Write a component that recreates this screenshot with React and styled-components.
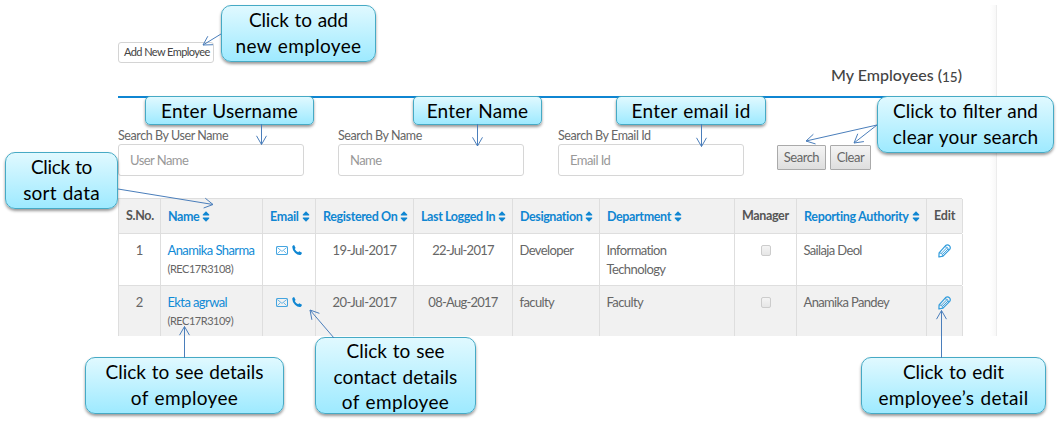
import React from 'react';
import styled, { createGlobalStyle } from 'styled-components';

const GlobalStyle = createGlobalStyle`
  * { box-sizing: border-box; }
  body { margin: 0; background: #fff; font-family: Lato, "Liberation Sans", sans-serif; color: #666; }
`;

const Stage = styled.div`
  position: relative;
  width: 1060px;
  height: 432px;
  overflow: hidden;
  background: #fff;
`;

const Page = styled.main`
  width: 997px;
  height: 331px;
  margin-top: 5px;
  padding: 37px 34px 0 118px;
  overflow: hidden;
  border-right: 1px solid #ececec;
  background: linear-gradient(to left, #f8f8f8, #fff 6px);
`;

const Txt = styled.span`
  letter-spacing: ${(p) => p.$ls || 0}px;
  white-space: nowrap;
`;

const AddButton = styled.button`
  display: block;
  width: 96px;
  height: 21px;
  padding: 0 0 1px 5px;
  border: 1px solid #d4d4d4;
  border-radius: 3px;
  background: #fff;
  color: #444;
  font: 11px/18px Lato, sans-serif;
  text-align: left;
`;

const Heading = styled.h1`
  height: 35px;
  margin: 0;
  padding-top: 2px;
  border-bottom: 2px solid #0f86d2;
  color: #444;
  font: 500 16px/20px Lato, sans-serif;
  text-align: right;
  white-space: nowrap;
`;

const OldStyle = styled.span`
  position: relative;
  top: 1px;
  font-size: 13.5px;
`;

const Search = styled.form`
  display: flex;
  gap: 34px;
  height: 71px;
  margin-top: 29px;
`;

const Field = styled.label`
  display: flex;
  flex-direction: column;
  width: 186px;
  color: #666;
  font-size: 12.5px;
  line-height: 17px;
`;

const Input = styled.input`
  width: 186px;
  height: 32px;
  padding: 0 11px 0;
  border: 1px solid #d6d6d6;
  border-radius: 3px;
  background: #fff;
  font: 13px Lato, sans-serif;
  letter-spacing: -0.55px;
  &::placeholder { color: #999; opacity: 1; }
`;

const Buttons = styled.div`
  display: flex;
  gap: 4px;
  padding-top: 18px;
  margin-left: -1px;
`;

const Button = styled.button`
  width: ${(p) => p.$w}px;
  height: 25px;
  padding: 0 0 1px;
  border: 1px solid #aaa;
  border-radius: 1px;
  background: linear-gradient(#f4f4f4, #dedede);
  color: #666;
  font: 13px Lato, sans-serif;
  letter-spacing: -0.5px;
`;

const Row = styled.div`
  display: grid;
  grid-template-columns: 42px 102px 53px 98px 99px 87px 135px 62px 130px 37px;
  height: ${(p) => p.$h}px;
  border-top: 1px solid #dedede;
  background: ${(p) => (p.$shade ? '#f1f1f1' : '#fff')};
`;

const Cell = styled.div`
  padding: 7px 0 0 ${(p) => (p.$center ? 0 : 6.5)}px;
  border-left: 1px solid #dedede;
  text-align: ${(p) => (p.$center ? 'center' : 'left')};
  font-size: 13px;
  line-height: 18.5px;
  &:last-child { border-right: 1px solid #dedede; }
`;

const HeadCell = styled(Cell)`
  display: flex;
  align-items: center;
  gap: 3px;
  padding: ${(p) => (p.$link ? 3 : 0)}px 0 0 7px;
  color: ${(p) => (p.$link ? '#0f86d2' : '#555')};
  font-weight: 700;
  font-size: 12.5px;
`;

const NameLink = styled.a`
  display: block;
  color: #0f8ad6;
`;

const Code = styled.small`
  display: block;
  font-size: 11px;
`;

const Icons = styled.span`
  display: flex;
  align-items: center;
  gap: 4px;
  padding: 4px 0 0 6px;
`;

const Check = styled.span`
  display: block;
  width: 10px;
  height: 11px;
  margin: 4px auto 0;
  border: 1px solid #ccc;
  border-radius: 2px;
  background: linear-gradient(#f4f4f4, #e6e6e6);
`;

const SortIcon = styled.svg`
  display: block;
  flex: none;
  margin-top: -3px;
`;

const EditIcon = styled.svg`
  display: block;
  margin: 3px auto 0;
`;

const Arrows = styled.svg`
  position: absolute;
  inset: 0;
  pointer-events: none;
`;

const Bubble = styled.div`
  position: absolute;
  left: ${(p) => p.$x}px;
  top: ${(p) => p.$y}px;
  width: ${(p) => p.$w}px;
  height: ${(p) => p.$h}px;
  padding-top: ${(p) => (p.$h > 60 ? 0 : 1)}px;
  border: 1px solid #46aac5;
  border-radius: ${(p) => (p.$h > 40 ? 10 : 5)}px;
  background: linear-gradient(#e0f9ff, #9eeaff);
  box-shadow: 0 2px 3px rgba(0, 0, 0, 0.4);
  color: #000;
  font-size: 19px;
  line-height: ${(p) => (p.$h > 60 ? 25.5 : 26)}px;
  text-align: center;
`;

const Line = styled.div`
  letter-spacing: ${(p) => p.$ls}px;
  word-spacing: 1px;
  white-space: nowrap;
`;

const Sort = () => (
  <SortIcon width="8" height="11" viewBox="0 0 8 11" fill="#0f86d2">
    <path d="M4 .3 7.2 3.6Q7.6 4.5 6.8 4.5H1.2Q.4 4.5.8 3.6ZM4 10.7.8 7.4Q.4 6.5 1.2 6.5H6.8Q7.6 6.5 7.2 7.4Z" />
  </SortIcon>
);

const Contact = () => (
  <Icons>
    <svg width="12" height="9" viewBox="0 0 12 9" fill="none" stroke="#2f9bdc" strokeWidth=".9">
      <rect x=".5" y=".5" width="11" height="8" rx=".6" />
      <path d="M1.3 1.5 6 5.4 10.7 1.5M1.4 7.6 4.3 4.8M10.6 7.6 7.7 4.8" strokeWidth=".7" />
    </svg>
    <svg width="10" height="10" viewBox="0 0 10 10" fill="#0f86d2">
      <path d="M.3 1.5Q.8.3 2.1 0L3.6 2.9 2.7 4Q3.8 6.3 6.2 7.2L7.2 6.2 10 7.8Q9.8 9.3 8.5 9.9 5.8 10.4 3 7.7 0 4.6.3 1.5Z" />
    </svg>
  </Icons>
);

const Edit = () => (
  <EditIcon width="13" height="14" viewBox="0 0 13 14" fill="none" stroke="#2f9bdc" strokeWidth="1.2" strokeLinejoin="round">
    <path d="M.9 13 1.1 8.8 7.6 1.6Q9.6.1 11.4 1.7 13 3.4 11.7 5.4L5 12.1Z" />
    <path d="M1.1 8.8Q4.6 8.6 5 12.1M6.9 2.6Q10.2 2.9 10.7 6.2M3.5 9.2 8.9 3.7M4.6 10.4 10.1 4.9" strokeWidth=".9" />
  </EditIcon>
);

const heads = [
  ['S.No.', -0.3, false], ['Name', -0.4, true], ['Email', -0.3, true], ['Registered On', -0.37, true],
  ['Last Logged In', -0.4, true], ['Designation', -0.4, true], ['Department', -0.37, true],
  ['Manager', -0.35, false], ['Reporting Authority', -0.33, true], ['Edit', -0.2, false],
];

const rows = [
  { n: 1, name: 'Anamika Sharma', code: '(REC17R3108)', reg: '19-Jul-2017', log: '22-Jul-2017', des: 'Developer', dep: ['Information', 'Technology'], auth: 'Sailaja Deol' },
  { n: 2, name: 'Ekta agrwal', code: '(REC17R3109)', reg: '20-Jul-2017', log: '08-Aug-2017', des: 'faculty', dep: ['Faculty'], auth: 'Anamika Pandey' },
];

const arrows = [
  [221, 34, 203, 45], [261.5, 124, 261.5, 144.5], [477.5, 124, 477.5, 146], [701.5, 124, 701.5, 146.5],
  [877, 125, 806, 141], [877, 125, 854, 143], [118, 189, 213, 204.5], [184.5, 358, 184.5, 326.5],
  [334, 338, 310, 310], [941.5, 358, 941.5, 310.5],
];

const bubbles = [
  { x: 221, y: 5, w: 155, h: 57, lines: [['Click to add', -0.1], ['new employee', 0.35]] },
  { x: 145, y: 96, w: 169, h: 29, lines: [['Enter Username', 0.15]] },
  { x: 413, y: 96, w: 129, h: 29, lines: [['Enter Name', 0.2]] },
  { x: 616, y: 96, w: 150, h: 29, lines: [['Enter email id', 0.25]] },
  { x: 877, y: 96, w: 177, h: 57, lines: [['Click to filter and', 0], ['clear your search', 0.2]] },
  { x: 5, y: 152, w: 113, h: 57, lines: [['Click to', -0.35], ['sort data', 0.2]] },
  { x: 85, y: 357, w: 199, h: 57, lines: [['Click to see details', 0], ['of employee', 0.35]] },
  { x: 315, y: 337, w: 161, h: 77, lines: [['Click to see', 0], ['contact details', 0.1], ['of employee', 0.35]] },
  { x: 861, y: 357, w: 185, h: 57, lines: [['Click to edit', -0.05], ['employee’s detail', 0.35]] },
];

const Arrow = ({ p: [x1, y1, x2, y2] }) => {
  const a = Math.atan2(y2 - y1, x2 - x1);
  const wing = (d) => `${x2 - 10 * Math.cos(a + d)} ${y2 - 10 * Math.sin(a + d)}`;
  return <path d={`M${x1} ${y1}L${x2} ${y2}M${wing(0.52)}L${x2} ${y2}L${wing(-0.52)}`} />;
};

export default function App() {
  return (
    <Stage>
      <GlobalStyle />
      <Page>
        <AddButton type="button"><Txt $ls={-0.57}>Add New Employee</Txt></AddButton>
        <Heading>My Employees (<OldStyle>15</OldStyle>)</Heading>
        <Search>
          <Field><Txt $ls={-0.42}>Search By User Name</Txt><Input placeholder="User Name" /></Field>
          <Field><Txt $ls={-0.42}>Search By Name</Txt><Input placeholder="Name" /></Field>
          <Field><Txt $ls={-0.42}>Search By Email Id</Txt><Input placeholder="Email Id" /></Field>
          <Buttons>
            <Button type="button" $w={49}>Search</Button>
            <Button type="button" $w={41}>Clear</Button>
          </Buttons>
        </Search>
        <Row $h={35} $shade>
          {heads.map(([t, ls, link]) => (
            <HeadCell key={t} $link={link}><Txt $ls={ls}>{t}</Txt>{link && <Sort />}</HeadCell>
          ))}
        </Row>
        {rows.map((r) => (
          <Row key={r.n} $h={52} $shade={r.n === 2}>
            <Cell $center>{r.n}</Cell>
            <Cell><NameLink><Txt $ls={-0.6}>{r.name}</Txt></NameLink><Code><Txt $ls={-0.48}>{r.code}</Txt></Code></Cell>
            <Cell><Contact /></Cell>
            <Cell $center><Txt $ls={-0.55}>{r.reg}</Txt></Cell>
            <Cell $center><Txt $ls={-0.75}>{r.log}</Txt></Cell>
            <Cell><Txt $ls={-0.6}>{r.des}</Txt></Cell>
            <Cell>{r.dep.map((d) => <div key={d}><Txt $ls={-0.6}>{d}</Txt></div>)}</Cell>
            <Cell $center><Check /></Cell>
            <Cell><Txt $ls={-0.65}>{r.auth}</Txt></Cell>
            <Cell $center><Edit /></Cell>
          </Row>
        ))}
      </Page>
      {bubbles.map((b) => (
        <Bubble key={b.x} $x={b.x} $y={b.y} $w={b.w} $h={b.h}>
          {b.lines.map(([t, ls]) => <Line key={t} $ls={ls}>{t}</Line>)}
        </Bubble>
      ))}
      <Arrows width="1060" height="432" fill="none" stroke="#4a7ebb" strokeWidth="1">
        {arrows.map((p) => <Arrow key={p.join()} p={p} />)}
      </Arrows>
    </Stage>
  );
}
